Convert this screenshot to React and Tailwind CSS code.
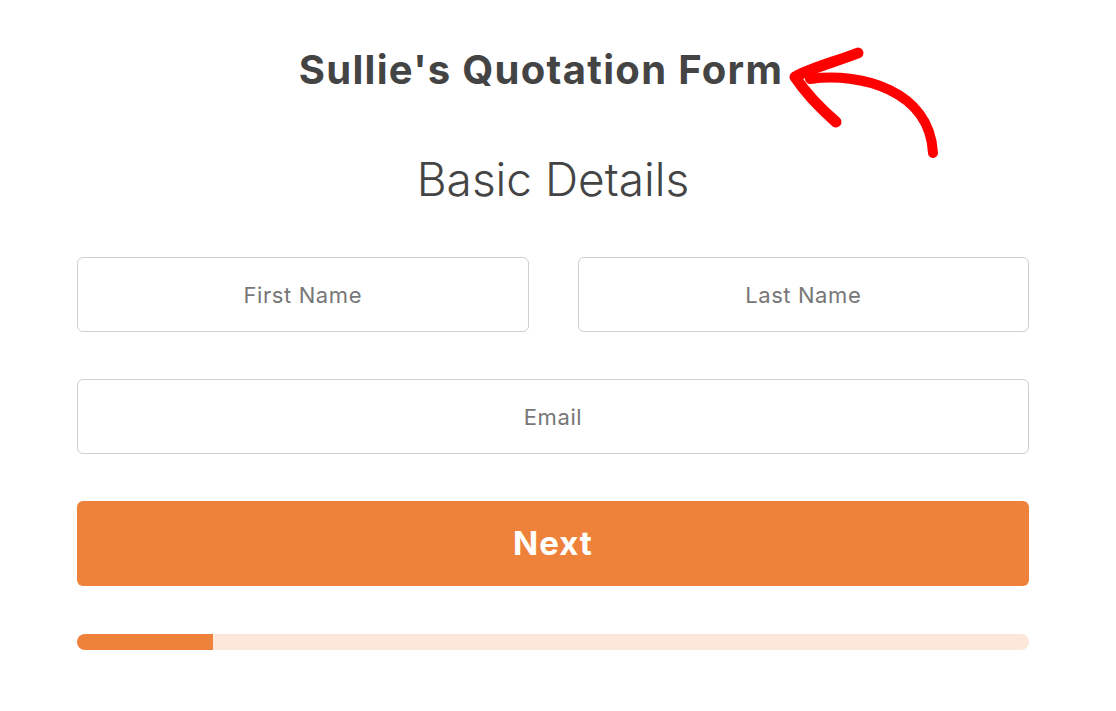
import React from "react";

const Arrow = () => (
  <svg
    className="absolute left-[780px] top-[40px]"
    width="180"
    height="130"
    viewBox="0 0 180 130"
    fill="none"
  >
    {/* curved shaft */}
    <path
      d="M30 39 C 80 32, 150 50, 153 113"
      stroke="#ff0000"
      strokeWidth="10"
      strokeLinecap="round"
    />
    {/* arrow head */}
    <path
      d="M78 13 C 55 22, 30 28, 15 37 C 25 52, 40 68, 56 82"
      stroke="#ff0000"
      strokeWidth="11"
      strokeLinecap="round"
      strokeLinejoin="round"
    />
  </svg>
);

const Field = ({ placeholder, className = "" }) => (
  <input
    type="text"
    placeholder={placeholder}
    className={`h-[75px] rounded-md border border-[#cfcfcf] bg-white text-center text-[22px] tracking-[0.6px] text-[#444] placeholder:text-[#777] outline-none ${className}`}
  />
);

const App = () => {
  return (
    <div className="relative h-[711px] w-full overflow-hidden bg-white font-['Inter','Liberation_Sans',sans-serif]">
      <div className="ml-[77px] flex w-[952px] flex-col">
        <h1 className="pr-[24px] pt-[46px] text-center text-[40px] leading-[48px] font-bold tracking-[1.3px] text-[#444]">
          Sullie's Quotation Form
        </h1>

        <h2 className="mt-[57px] text-center text-[46px] leading-[56px] font-light text-[#444]">
          Basic Details
        </h2>

        <div className="mt-[50px] grid grid-cols-2 gap-x-[49px]">
          <Field placeholder="First Name" />
          <Field placeholder="Last Name" />
        </div>

        <Field placeholder="Email" className="mt-[47px] w-full" />

        <button className="mt-[47px] h-[85px] w-full rounded-md bg-[#ef823a] text-[33px] font-bold tracking-[1px] text-white">
          Next
        </button>

        <div className="mt-[48px] flex h-[16px] w-full overflow-hidden rounded-full bg-[#fde6da]">
          <div className="h-full w-[136px] bg-[#ef823a]" />
        </div>
      </div>

      <Arrow />
    </div>
  );
};

export default App;
